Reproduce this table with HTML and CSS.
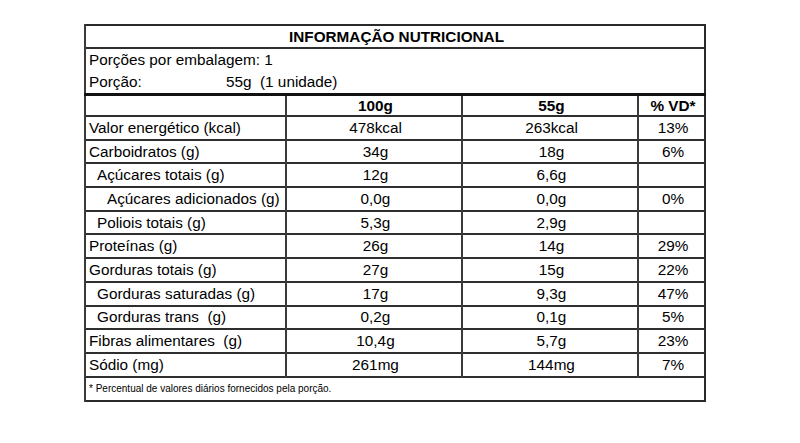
FILE: index.html
```html
<!DOCTYPE html>
<html lang="pt-BR">
<head>
<meta charset="utf-8">
<title>Informação Nutricional</title>
<link rel="stylesheet" href="styles.css">
</head>
<body>
<table class="nutri">
  <colgroup>
    <col class="c1"><col class="c2"><col class="c3"><col class="c4">
  </colgroup>
  <tr class="title"><td colspan="4">INFORMAÇÃO NUTRICIONAL</td></tr>
  <tr class="info"><td colspan="4">Porções por embalagem: 1</td></tr>
  <tr class="info last"><td colspan="4"><span class="lbl">Porção:</span>55g&nbsp; (1 unidade)</td></tr>
  <tr class="head"><td></td><td>100g</td><td>55g</td><td>% VD*</td></tr>
  <tr><td>Valor energético (kcal)</td><td>478kcal</td><td>263kcal</td><td>13%</td></tr>
  <tr><td>Carboidratos (g)</td><td>34g</td><td>18g</td><td>6%</td></tr>
  <tr><td class="i1">Açúcares totais (g)</td><td>12g</td><td>6,6g</td><td></td></tr>
  <tr><td class="i2">Açúcares adicionados (g)</td><td>0,0g</td><td>0,0g</td><td>0%</td></tr>
  <tr><td class="i1">Poliois totais (g)</td><td>5,3g</td><td>2,9g</td><td></td></tr>
  <tr><td>Proteínas (g)</td><td>26g</td><td>14g</td><td>29%</td></tr>
  <tr><td>Gorduras totais (g)</td><td>27g</td><td>15g</td><td>22%</td></tr>
  <tr><td class="i1">Gorduras saturadas (g)</td><td>17g</td><td>9,3g</td><td>47%</td></tr>
  <tr><td class="i1">Gorduras trans&nbsp; (g)</td><td>0,2g</td><td>0,1g</td><td>5%</td></tr>
  <tr><td>Fibras alimentares&nbsp; (g)</td><td>10,4g</td><td>5,7g</td><td>23%</td></tr>
  <tr><td>Sódio (mg)</td><td>261mg</td><td>144mg</td><td>7%</td></tr>
  <tr class="foot"><td colspan="4">* Percentual de valores diários fornecidos pela porção.</td></tr>
</table>
</body>
</html>
```

FILE: styles.css
```css
html, body {
  margin: 0;
  padding: 0;
  background: #fff;
}

body {
  padding: 24px 0 0 84px;
  font-family: "Liberation Sans", Arial, sans-serif;
  color: #000;
}

.nutri {
  border-collapse: collapse;
  width: 620px;
  table-layout: fixed;
  border: 2px solid #2a2a2a;
  font-size: 15.3px;
}

.c1 { width: 201px; }
.c2 { width: 176px; }
.c3 { width: 176px; }
.c4 { width: 67px; }

.nutri td {
  height: 21.7px;
  padding: 0 0 0 3px;
  line-height: 16px;
  border-top: 2px solid #2e2e2e;
  border-left: 2px solid #3a3a3a;
  text-align: center;
  white-space: nowrap;
}

.nutri td:first-child {
  text-align: left;
}

.nutri .title td {
  height: 21px;
  text-align: center;
  font-weight: bold;
  border-top: none;
}

.nutri .info td {
  height: 22px;
}

.nutri .info + .info td {
  border-top: none;
}

.lbl {
  display: inline-block;
  width: 137px;
}

.nutri .head td {
  border-top: 3px solid #111;
  height: 19px;
  font-weight: bold;
}

.nutri .head td:first-child {
  text-align: left;
}

.nutri td.i1 { padding-left: 11px; }
.nutri td.i2 { padding-left: 21px; }

.nutri .foot td {
  font-size: 10px;
  height: 22px;
}
```
